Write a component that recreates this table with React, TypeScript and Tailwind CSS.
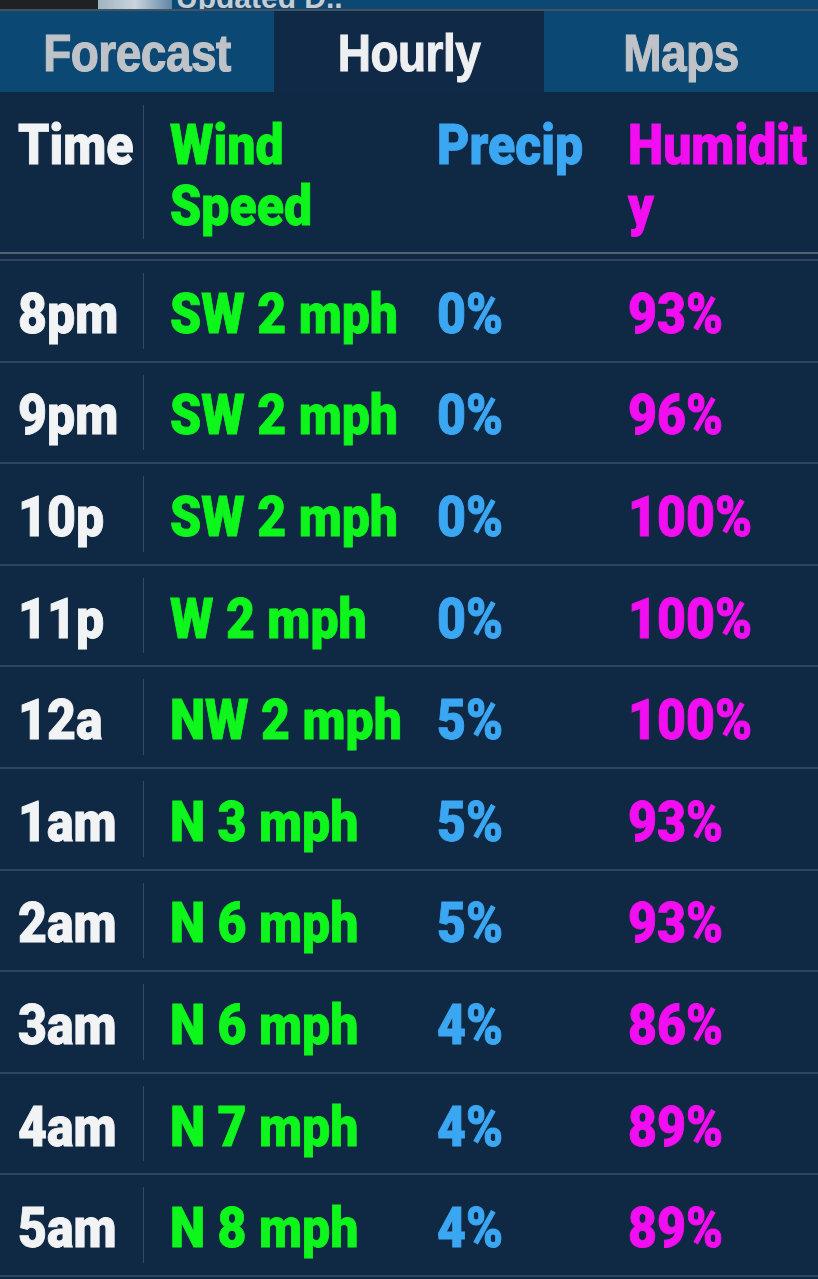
const rows = [
  { time: "8pm", wind: "SW 2 mph", precip: "0%", hum: "93%" },
  { time: "9pm", wind: "SW 2 mph", precip: "0%", hum: "96%" },
  { time: "10p", wind: "SW 2 mph", precip: "0%", hum: "100%" },
  { time: "11p", wind: "W 2 mph", precip: "0%", hum: "100%" },
  { time: "12a", wind: "NW 2 mph", precip: "5%", hum: "100%" },
  { time: "1am", wind: "N 3 mph", precip: "5%", hum: "93%" },
  { time: "2am", wind: "N 6 mph", precip: "5%", hum: "93%" },
  { time: "3am", wind: "N 6 mph", precip: "4%", hum: "86%" },
  { time: "4am", wind: "N 7 mph", precip: "4%", hum: "89%" },
  { time: "5am", wind: "N 8 mph", precip: "4%", hum: "89%" },
];

function Tab({ label, active }: { label: string; active?: boolean }) {
  return (
    <div
      className={
        active
          ? "flex items-center justify-center bg-[#0f2946] text-[#eeeff1]"
          : "flex items-center justify-center bg-[#0b4874] text-[#bfc3c7]"
      }
    >
      <span className="inline-block scale-y-[1.12] pt-1 text-[46px] font-black tracking-[-0.5px] [-webkit-text-stroke:1px_currentcolor]">
        {label}
      </span>
    </div>
  );
}

export default function App() {
  return (
    <div className="min-h-[1279px] w-[818px] bg-[#0f2843] font-['Roboto',sans-serif]">
      {/* top strip, mostly scrolled away */}
      <div className="flex h-[9px] overflow-hidden bg-[#0b4874]">
        <div className="w-[98px] bg-[#1f2123]" />
        <div className="w-[74px] bg-gradient-to-r from-[#9fb3c2] via-[#c9d5de] to-[#5f86a6]" />
        <span className="-mt-[25px] ml-[4px] font-['Liberation_Sans',sans-serif] text-[30px] font-bold text-[#c6ccd2]">
          Updated D..
        </span>
      </div>
      <div className="h-[2px] bg-[#46525e]" />

      {/* tabs */}
      <div className="grid h-[81px] grid-cols-[274px_270px_1fr] font-['Liberation_Sans',sans-serif]">
        <Tab label="Forecast" />
        <Tab label="Hourly" active />
        <Tab label="Maps" />
      </div>

      {/* header */}
      <div className="grid h-[160px] grid-cols-[143px_1px_293px_191px_1fr] text-[50px] font-black leading-[54px] [-webkit-text-stroke:0.8px_currentcolor]">
        <div className="pl-[18px] pt-[23px] text-[#f2f3f5]">
          <span className="inline-block origin-top scale-y-[1.12]">Time</span>
        </div>
        <div className="my-[13px] bg-[#324a63]" />
        <div className="pl-[26px] pt-[23px] text-[#0ef61c]">
          <span className="inline-block origin-top scale-y-[1.12]">
            Wind
            <br />
            Speed
          </span>
        </div>
        <div className="pt-[23px] text-[#3ba7f3]">
          <span className="inline-block origin-top scale-y-[1.12]">Precip</span>
        </div>
        <div className="break-all pt-[23px] text-[#f20ef0]">
          <span className="inline-block origin-top scale-y-[1.12]">Humidity</span>
        </div>
      </div>
      <div className="h-[2px] bg-[#56616e]" />
      <div className="h-[5px]" />
      <div className="h-[2px] bg-[#34465a]" />

      {/* rows */}
      {rows.map((r) => (
        <div
          key={r.time}
          className="grid h-[101.6px] grid-cols-[143px_1px_293px_191px_1fr] border-b-2 border-[#2b4562] text-[50px] font-black leading-[54px] [-webkit-text-stroke:0.8px_currentcolor]"
        >
          <div className="flex items-center pl-[18px] pt-[6px] text-[#f2f3f5]">
            <span className="inline-block scale-y-[1.12]">{r.time}</span>
          </div>
          <div className="my-[12px] bg-[#324a63]" />
          <div className="flex items-center pl-[26px] pt-[6px] text-[#0ef61c]">
            <span className="inline-block scale-y-[1.12] whitespace-nowrap">{r.wind}</span>
          </div>
          <div className="flex items-center pt-[6px] text-[#3ba7f3]">
            <span className="inline-block scale-y-[1.12]">{r.precip}</span>
          </div>
          <div className="flex items-center pt-[6px] text-[#f20ef0]">
            <span className="inline-block scale-y-[1.12]">{r.hum}</span>
          </div>
        </div>
      ))}
    </div>
  );
}
